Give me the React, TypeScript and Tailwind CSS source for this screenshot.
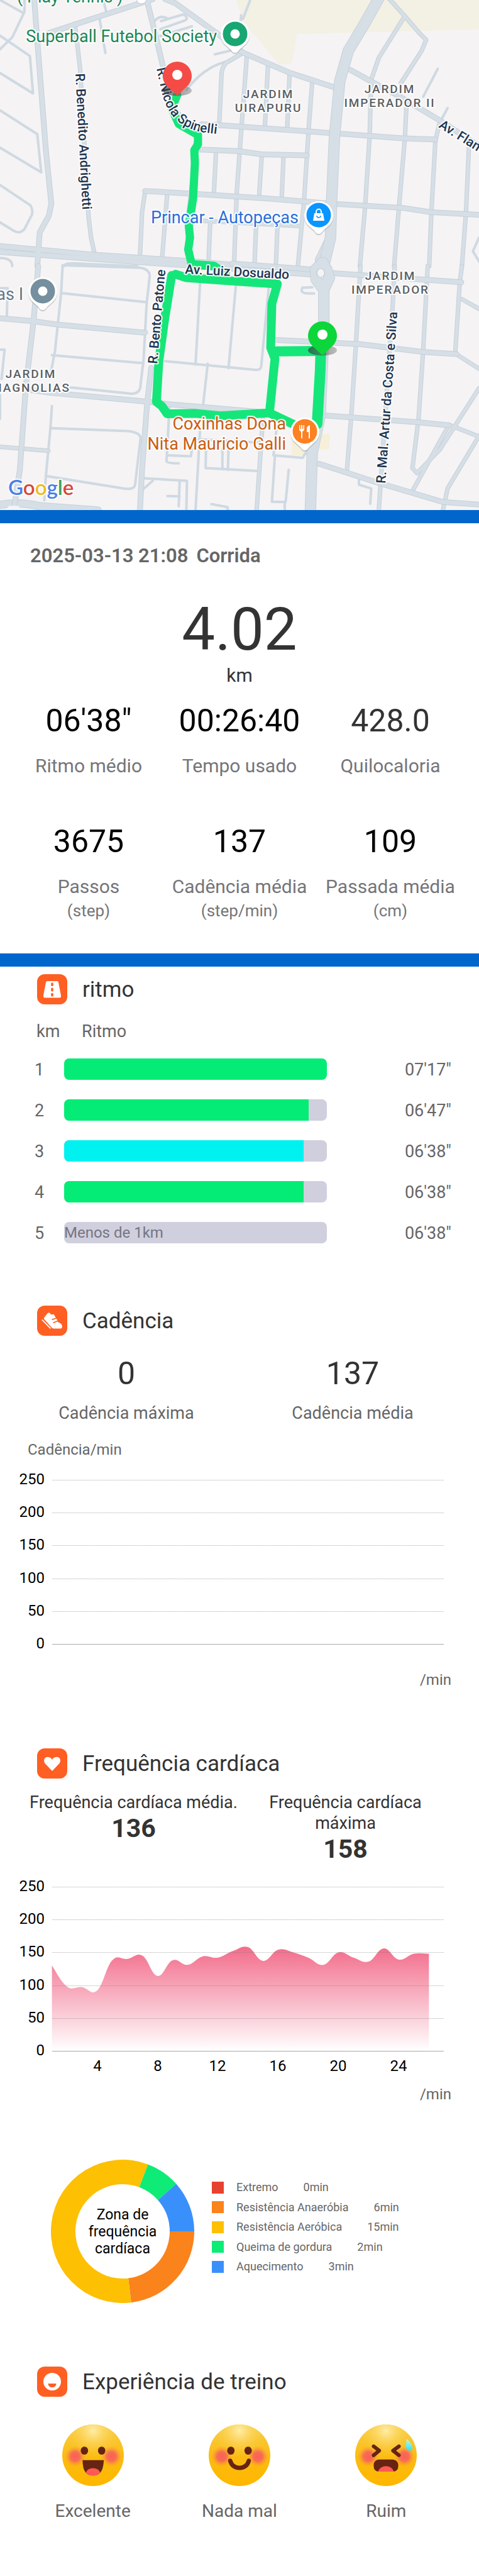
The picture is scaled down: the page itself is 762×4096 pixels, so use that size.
import type { ReactNode } from "react";

const PLACE = "font-[Roboto,sans-serif] text-[27px] font-normal [paint-order:stroke] [stroke-linejoin:round]";
const DISTRICT = "fill-[#5b5f63] font-[Roboto,sans-serif] text-[19px] font-medium tracking-widest [paint-order:stroke] [stroke-linejoin:round]";
const STREET = "fill-[#1f3550] font-[Roboto,sans-serif] text-[21px] font-medium [paint-order:stroke] [stroke-linejoin:round]";

/* Road geometry: north tile and south tile of the map, each on a 1568-unit grid. */
const NORTH_LANES = [
  "M80,-10 L80,70 L40,220 L0,290", "M0,0 L75,75", "M0,210 L98,330 L108,550 L0,430",
  "M0,650 L122,790 L135,1015 L0,870",
  "M0,1090 L100,1210 Q112,1250 100,1280 L80,1350 Q65,1380 45,1360 L0,1310",
  "M0,1520 Q40,1520 40,1568", "M210,1568 Q210,1548 250,1552 L450,1568",
  "M325,100 L345,312", "M340,15 L348,70", "M505,125 Q525,85 548,108",
  "M527,124 L600,85 Q620,105 606,120 L525,172", "M525,212 L628,155", "M820,-5 L795,112", "M789,90 L788,130",
  "M703,320 L770,292", "M737,365 Q665,400 610,530", "M1433,405 L1385,570", "M1465,637 L1440,720", "M1568,1400 L1548,1480 L1568,1540",
];
const NORTH_STREETS = [
  "M245,140 L262,400 L290,1280 L298,1400 L310,1500",
  "M797,310 L740,370 Q725,400 725,440 L718,720",
  "M808,330 L790,760 L775,1130 L766,1568", "M877,385 L867,750", "M948,430 L940,760",
  "M1022,480 L1010,770 L995,1190 L975,1568",
  "M1275,-5 L1325,95 L1370,190 L1395,235 L1380,300 L1312,490",
  "M1325,95 L1240,340 L1215,470 L1210,800 L1195,1220 L1178,1568",
  "M1440,715 L1425,830 L1412,1250 L1405,1568", "M1330,640 L1325,820 L1305,1240 L1290,1568",
  "M1535,860 L1525,1260 L1512,1568", "M707,895 L700,1145", "M857,910 L848,1160", "M928,920 L922,1170",
  "M475,1125 L465,1250 L458,1512", "M547,1150 L530,1535", "M650,1300 L985,1332",
  "M688,1310 L682,1568", "M838,1340 L833,1568", "M908,1340 L903,1568",
];
const NORTH_ROADS = [
  "M112,-5 L120,190 L150,880 L168,1200 L160,1270 L130,1370 L122,1568",
  "M160,195 L320,100 L500,-5", "M540,-5 L575,20 L720,210 L797,312",
  "M480,-5 L515,250 L545,480 L570,640 L620,760 L650,790 L635,900 L638,960 L620,1250 L615,1500",
  "M797,312 L950,430 L1095,515", "M660,732 L740,740 L1095,785 L1320,815 L1425,822",
  "M1145,410 L1215,480 L1300,560 L1440,710 L1568,860",
  "M640,880 L780,890 L860,910 L1005,915",
  "M475,1125 L620,1140 L880,1170 L1085,1200 L1320,1225 L1410,1250 L1568,1265",
  "M0,1450 L300,1500 L620,1538 L850,1575", "M0,1485 L300,1525 L600,1562 L650,1575", "M1080,1380 L1040,1530 L1040,1580",
];
const SOUTH_LANES = [
  "M205,-5 L460,10 Q490,20 490,60 L480,220 L470,550 L460,700 Q460,752 430,752 L230,715",
  "M205,-5 L200,160 L180,500 L165,640", "M205,160 L480,213", "M170,525 L470,572",
  "M0,492 L15,492 L5,665", "M0,130 L25,130 L22,310", "M170,825 L165,955 L150,1240 L145,1380",
  "M165,955 L420,972 Q460,980 460,1015 L442,1290 Q438,1320 405,1310 L155,1238",
  "M470,1250 L612,1265 L610,1437", "M470,1312 L500,1265", "M588,1270 L585,1415", "M548,1355 L588,1357", "M692,1402 L745,1420 L745,1437",
  "M555,820 L545,1150 Q548,1162 585,1162", "M548,1115 L625,1120 L632,1020", "M655,960 L640,1437", "M680,575 L665,815",
  "M540,560 L840,612 Q855,610 855,590 L880,120", "M655,95 L640,580", "M772,115 L748,602",
  "M650,1020 L850,1040", "M675,1030 L673,1190 L838,1207", "M728,1080 L728,1195", "M748,1080 L746,1200",
  "M905,960 L895,1115 L990,1130 L1008,1080", "M945,1200 L935,1390 L890,1388 L900,1115", "M932,1390 L932,1437",
  "M1175,1262 L1175,1288 L1215,1310 L1212,1400", "M1022,125 L990,127 Q982,155 1000,160 L1028,162", "M0,760 L0,900",
];
const SOUTH_STREETS = [
  "M1180,0 L1165,460 L1150,880 L1135,1215", "M1292,0 L1285,240 L1240,1437",
  "M1400,0 L1385,500 L1370,900 L1350,1190 L1365,1220 L1440,1080 L1568,720",
  "M1512,0 L1505,95 L1490,515", "M1490,515 L1568,605", "M1512,195 L1568,252",
  "M1470,935 L1350,1325", "M1470,935 L1568,1005 M1568,1000 L1465,1310 L1450,1437", "M862,860 L840,1437", "M0,1065 L158,1088",
];
const SOUTH_ROADS = [
  "M125,0 L110,320 L85,700 L65,1200 L45,1437", "M0,307 L110,325 L190,345 L475,392",
  "M100,730 L160,745 L490,800 L560,815 L870,862", "M495,600 L482,800 L465,1200 L458,1437",
  "M900,435 L1180,460 L1380,505 L1495,518", "M1060,880 L1370,920 L1470,938",
  "M1045,1165 L1230,1272 L1450,1390 L1568,1405", "M760,-15 L1020,20", "M760,15 L1020,50", "M1080,40 L1510,95",
];

function Roads({ paths, width, cased }: { paths: string[]; width: number; cased?: boolean }) {
  return (
    <g fill="none" strokeLinecap="round" strokeLinejoin="round">
      {cased && paths.map((d) => <path key={"c" + d} d={d} stroke="#c6d0d9" strokeWidth={width + 1} vectorEffect="non-scaling-stroke" />)}
      {paths.map((d) => <path key={d} d={d} stroke={cased ? "#d6dfe6" : "#cfd9e2"} strokeWidth={cased ? width - 1 : width} vectorEffect="non-scaling-stroke" />)}
    </g>
  );
}

function Poi({ x, y, color, children }: { x: number; y: number; color: string; children?: ReactNode }) {
  return (
    <g transform={`translate(${x} ${y})`}>
      <path d="M0,30 C-4,30 -5,27 -8,24 L-18,15 A23,23 0 1 1 18,15 L8,24 C5,27 4,30 0,30Z" fill="#8c949c" opacity="0.45" transform="translate(0 2)" />
      <path d="M0,30 C-4,30 -5,27 -8,24 L-18,15 A23,23 0 1 1 18,15 L8,24 C5,27 4,30 0,30Z" fill="#fff" />
      <circle r="19.5" fill={color} />
      {children ?? <circle r="7.5" fill="#fff" />}
    </g>
  );
}

function RoutePin({ x, y, color }: { x: number; y: number; color: string }) {
  return (
    <g transform={`translate(${x} ${y})`}>
      <ellipse cx="0" cy="-8" rx="23" ry="8.5" fill="url(#pinShadow)" />
      <path d="M0,0 L-16,-15 C-20,-19 -23,-25 -23,-31 A23,23 0 0 1 23,-31 C23,-25 20,-19 16,-15Z" fill={color} />
      <circle cy="-33" r="8" fill="#fff" />
    </g>
  );
}

function RouteMap() {
  return (
    <svg viewBox="0 0 762 811" className="block h-auto w-full bg-[#f5f3f4]" role="img" aria-label="Mapa">
      <defs>
        <linearGradient id="pinShadow" x1="0" x2="1">
          <stop offset="0" stopColor="#333" stopOpacity="0.65" />
          <stop offset="1" stopColor="#555" stopOpacity="0.35" />
        </linearGradient>
        <path id="nicola" d="M249,109 L257,145 Q263,172 277,187 Q293,204 320,210 L380,217" />
      </defs>
      <g transform="scale(0.486 0.2699)">
        <path d="M773,0 L800,140 L850,240 L910,375 Q935,385 955,370 L972,200 L1568,172 V0Z" fill="#f3f0e4" />
        <Roads paths={NORTH_LANES} width={4} />
        <Roads paths={NORTH_STREETS} width={6} cased />
        <Roads paths={NORTH_ROADS} width={8} cased />
        <Roads paths={["M1240,-10 L1190,150 L1140,300 L1112,480 L1095,800 L1085,1200 L1082,1400 L1058,1580"]} width={17} cased />
      </g>
      <g transform="translate(0 423.1) scale(0.486 0.2699)">
        <path d="M955,1030 L1020,1000 L1078,985 V1078 H1030 L1005,1115 H955Z" fill="#f6efd9" />
        <Roads paths={SOUTH_LANES} width={4} />
        <Roads paths={SOUTH_STREETS} width={6} cased />
        <Roads paths={["M-10,1410 Q60,1385 130,1415 L320,1440"]} width={12} cased />
        <Roads paths={SOUTH_ROADS} width={8} cased />
        <Roads paths={["M1058,-20 L1032,20 L1035,80 L1060,140 L1078,70 L1070,20 L1055,-20", "M1060,130 L1060,350 L1055,600 L1048,880 L1022,1100 L1016,1437"]} width={17} cased />
        <ellipse cx="1050" cy="40" rx="13" ry="25" fill="#f5f3f4" stroke="#c2ccd6" strokeWidth="3" />
        <path d="M18,1437 L30,1412 H60 L70,1437Z" fill="#f5f3f4" />
      </g>
      <g fill="none" stroke="#15e67a" strokeLinecap="round" strokeLinejoin="round">
        <g transform="scale(0.486 0.2699)" strokeWidth="13">
          <path d="M580,560 L562,640 L585,730 L648,795 L648,850 L636,885 L638,960 L632,1170 L618,1330 L622,1400 L616,1470 L628,1560" vectorEffect="non-scaling-stroke" />
        </g>
        <g transform="translate(0 423.1) scale(0.486 0.2699)" strokeWidth="14">
          <path d="M628,-10 L700,0 L740,50 M628,-10 L640,50" vectorEffect="non-scaling-stroke" />
          <path d="M575,48 L610,68 L760,88 L908,105 L890,220 L886,480 L900,545 L882,865 L720,882 L640,868 L547,870 L530,825 L512,800 L520,560 L540,300 L562,55" vectorEffect="non-scaling-stroke" />
          <path d="M882,865 L960,932" vectorEffect="non-scaling-stroke" />
          <path d="M1050,510 L1048,620 L1038,930" strokeWidth="17" vectorEffect="non-scaling-stroke" />
          <path d="M905,503 L1045,500" strokeWidth="16" vectorEffect="non-scaling-stroke" />
        </g>
      </g>

      <g stroke="#fff" strokeOpacity="0.9" strokeWidth="4">
        <text x="27" y="4" className={PLACE} fill="#1d8556">( Play Tennis )</text>
        <text x="345" y="67" textAnchor="end" className={PLACE} fill="#1d8556">Superball Futebol Society</text>
        <text x="475" y="355" textAnchor="end" className={PLACE} fill="#2a6fdb">Princar - Autopeças</text>
        <text x="37" y="477" textAnchor="end" className={PLACE} fill="#607887">as I</text>
        <text x="455" y="683" textAnchor="end" className={PLACE} fill="#c95c10">Coxinhas Dona</text>
        <text x="455" y="715" textAnchor="end" className={PLACE} fill="#c95c10">Nita Mauricio Galli</text>
        <g textAnchor="middle">
          <text x="427" y="156" className={DISTRICT}>JARDIM</text>
          <text x="427" y="178" className={DISTRICT}>UIRAPURU</text>
          <text x="620" y="148" className={DISTRICT}>JARDIM</text>
          <text x="620" y="170" className={DISTRICT}>IMPERADOR II</text>
          <text x="621" y="445" className={DISTRICT}>JARDIM</text>
          <text x="621" y="467" className={DISTRICT}>IMPERADOR</text>
          <text x="49" y="601" className={DISTRICT}>JARDIM</text>
          <text x="49" y="623" className={DISTRICT}>MAGNOLIAS</text>
        </g>
        <text transform="translate(120 117) rotate(87)" className={STREET}>R. Benedito Andrighetti</text>
        <text className={STREET}><textPath href="#nicola">R. Nicola Spinelli</textPath></text>
        <text transform="translate(697 202) rotate(32)" className={STREET}>Av. Flam</text>
        <text transform="translate(294 435) rotate(3)" className={STREET}>Av. Luiz Dosualdo</text>
        <text transform="translate(250 579) rotate(-85)" className={STREET}>R. Bento Patone</text>
        <text transform="translate(613 769) rotate(-86)" className={STREET}>R. Mal. Artur da Costa e Silva</text>
        <text x="13" y="787" className="font-[Lato,sans-serif] text-[33px] font-semibold [paint-order:stroke] [stroke-linejoin:round]">
          <tspan fill="#4a80e8">G</tspan><tspan fill="#d8483c">o</tspan><tspan fill="#eebb22">o</tspan><tspan fill="#4a80e8">g</tspan><tspan fill="#3fa256">l</tspan><tspan fill="#d8483c">e</tspan>
        </text>
      </g>

      <circle cx="225" cy="-2" r="8" fill="#fff" stroke="#c2ccd6" />
      <Poi x={374} y={54} color="#18a673" />
      <Poi x={507} y={342} color="#0a95ff">
        <path d="M-7,-3 H7 L9,9 H-9Z" fill="#fff" />
        <path d="M-4,-3 V-5 A4,4.500 0 0 1 4,-5 V-3" fill="none" stroke="#fff" strokeWidth="2" />
        <path d="M-3,1 A3,3 0 0 0 3,1" fill="none" stroke="#0a95ff" strokeWidth="1.500" />
      </Poi>
      <Poi x={68} y={463} color="#758f9e" />
      <Poi x={485} y={686} color="#fd8123">
        <path d="M-9,-10 V-4 Q-9,-1 -6,0 V11 H-4 V0 Q-1,-1 -1,-4 V-10 H-2.500 V-4 H-4 V-10 H-6 V-4 H-7.500 V-10Z" fill="#fff" />
        <path d="M8,-10 Q3,-9 3,-4 V1 H6 V11 H8Z" fill="#fff" />
      </Poi>
      <RoutePin x={282} y={152} color="#f54b46" />
      <RoutePin x={513} y={565} color="#0cd63a" />
    </svg>
  );
}

function Divider() {
  return <div className="h-[21px] bg-[#0066cc]" />;
}

function IconTile({ children }: { children: ReactNode }) {
  return (
    <svg viewBox="0 0 48 48" className="size-12 shrink-0" aria-hidden="true">
      <rect width="48" height="48" rx="12" fill="#ff5f22" />
      {children}
    </svg>
  );
}

function SectionTitle({ icon, children }: { icon: ReactNode; children: ReactNode }) {
  return (
    <header className="flex items-center gap-6 px-[59px]">
      <IconTile>{icon}</IconTile>
      <h2 className="pt-0.5 text-[35px] leading-[46px] text-[#333]">{children}</h2>
    </header>
  );
}

const roadIcon = (
  <>
    <path d="M16,11 H32 Q33.500,11 34,13 L38,34 Q38.500,37.500 35.500,37.500 H12.500 Q9.500,37.500 10,34 L14,13 Q14.500,11 16,11Z" fill="#fff" />
    <g fill="#ff5f22">
      <rect x="22.200" y="13.500" width="3.600" height="5.500" rx="1.500" />
      <rect x="22.200" y="21.500" width="3.600" height="6" rx="1.500" />
      <rect x="22.200" y="30" width="3.600" height="5.500" rx="1.500" />
    </g>
  </>
);

const shoeIcon = (
  <g transform="scale(0.233) translate(-16 -12)">
    <path d="M88,64 Q97,56 104,64 Q108,76 120,73 Q130,68 134,77 L145,98 L157,116 Q156,126 168,129 Q189,138 187,158 Q186,169 174,169 H132 Q122,169 116,162 L64,104 Q60,97 66,91Z" fill="#fff" />
    <path d="M52,110 L106,166" stroke="#fff" strokeWidth="7" strokeLinecap="round" />
    <path d="M120,107 L146,98 M128,129 L158,116" stroke="#ff5f22" strokeWidth="7" strokeLinecap="round" />
  </g>
);

const heartIcon = (
  <path d="M24,36 L13.500,25 C9.500,20.500 10.500,14.500 16,13.800 C20,13.300 22.500,15.500 24,18 C25.500,15.500 28,13.300 32,13.800 C37.500,14.500 38.500,20.500 34.500,25Z" fill="#fff" />
);

const faceIcon = (
  <>
    <circle cx="24" cy="24" r="14" fill="#fff" />
    <path d="M17.500,27 H30.500 Q30,33 24,33 Q18,33 17.500,27Z" fill="#ff5f22" />
  </>
);

function Stat({ value, label, unit, soft }: { value: string; label: string; unit?: string; soft?: boolean }) {
  return (
    <div className="flex flex-col items-center whitespace-nowrap">
      <span className={soft ? "text-[50px] leading-[58px] text-[#333]" : "text-[50px] leading-[58px] text-black"}>{value}</span>
      <span className="mt-[25px] text-[30px] leading-9 text-[#757579]">{label}</span>
      {unit && <span className="mt-1 text-[26px] leading-8 text-[#757579]">{unit}</span>}
    </div>
  );
}

const SPLITS = [
  { km: 1, pace: "07'17\"", share: 100, color: "#04ec75" },
  { km: 2, pace: "06'47\"", share: 93.1, color: "#04ec75" },
  { km: 3, pace: "06'38\"", share: 91.2, color: "#00f2f0" },
  { km: 4, pace: "06'38\"", share: 91.2, color: "#04ec75" },
  { km: 5, pace: "06'38\"", share: 0, color: "#04ec75", note: "Menos de 1km" },
];

function Splits() {
  return (
    <table className="mt-[26px] w-full border-collapse text-left text-[27px] text-[#666]">
      <thead>
        <tr className="h-[46px] align-top leading-[34px]">
          <th className="w-[102px] pl-[58px] font-normal">km</th>
          <th colSpan={2} className="pl-7 font-normal">Ritmo</th>
        </tr>
      </thead>
      <tbody>
        {SPLITS.map((s) => (
          <tr key={s.km} className="h-[65px]">
            <td className="pl-[55px]">{s.km}</td>
            <td>
              <div className="mb-1 flex h-[34px] items-center overflow-hidden rounded-lg bg-[#d0cfde]">
                <div className="h-full" style={{ width: `${s.share}%`, backgroundColor: s.color }} />
                {s.note && <span className="text-[24px] leading-none text-[#757582]">{s.note}</span>}
              </div>
            </td>
            <td className="w-[242px] pr-11 text-right">{s.pace}</td>
          </tr>
        ))}
      </tbody>
    </table>
  );
}

const HEART = [
  130, 98, 97, 92, 138, 140, 145, 114, 138, 131, 144, 142, 152, 158, 137, 154, 150, 142, 131, 150, 142, 136, 156, 139, 148, 148,
];

const xAt = (minute: number) => 82.6 + (minute - 1) * 23.99;
const yAt = (value: number) => 295 - value * 1.044;

function areaPath(values: number[]) {
  const pts = values.map((v, i) => [xAt(i + 1), yAt(v)]);
  const at = (i: number) => pts[Math.max(0, Math.min(pts.length - 1, i))];
  let d = `M${pts[0][0]},${pts[0][1]}`;
  for (let i = 1; i < pts.length; i++) {
    const [a, b, c, e] = [at(i - 2), at(i - 1), at(i), at(i + 1)];
    d += ` C${b[0] + (c[0] - a[0]) * 0.2},${b[1] + (c[1] - a[1]) * 0.2} ${c[0] - (e[0] - b[0]) * 0.2},${c[1] - (e[1] - b[1]) * 0.2} ${c[0]},${c[1]}`;
  }
  return `${d} L${pts[pts.length - 1][0]},295 L${pts[0][0]},295Z`;
}

function MinuteChart({ values, ticks = [] }: { values?: number[]; ticks?: number[] }) {
  return (
    <svg viewBox="0 0 762 338" className="block h-auto w-full">
      <defs>
        <linearGradient id="heartFill" x1="0" y1="0" x2="0" y2="1">
          <stop offset="0" stopColor="#f26c8b" />
          <stop offset="1" stopColor="#ffffff" />
        </linearGradient>
      </defs>
      {values && <path d={areaPath(values)} fill="url(#heartFill)" />}
      {[250, 200, 150, 100, 50].map((v) => (
        <line key={v} x1="83" x2="706" y1={Math.round(yAt(v)) + 0.5} y2={Math.round(yAt(v)) + 0.5} stroke="#777" strokeOpacity="0.6" strokeDasharray="1 1" />
      ))}
      <line x1="83" x2="706" y1="295.5" y2="295.5" stroke="#aaa" strokeWidth="1" />
      <g className="fill-black text-[24px]">
        {[250, 200, 150, 100, 50, 0].map((v) => (
          <text key={v} x="71" y={Math.round(yAt(v)) + 7} textAnchor="end">{v}</text>
        ))}
        {ticks.map((t) => (
          <text key={t} x={Math.round(xAt(t))} y="327" textAnchor="middle">{t}</text>
        ))}
      </g>
    </svg>
  );
}

const ZONES = [
  { name: "Extremo", minutes: 0, color: "#e74230" },
  { name: "Resistência Anaeróbia", minutes: 6, color: "#fa831b" },
  { name: "Resistência Aeróbica", minutes: 15, color: "#fdc003" },
  { name: "Queima de gordura", minutes: 2, color: "#0eeb77" },
  { name: "Aquecimento", minutes: 3, color: "#3a90fb" },
];

function Donut() {
  const total = ZONES.reduce((sum, z) => sum + z.minutes, 0);
  const point = (r: number, t: number) => `${114 + r * Math.cos(t)},${114 + r * Math.sin(t)}`;
  let start = 0;
  return (
    <svg viewBox="0 0 228 228" className="col-start-1 row-start-1 size-[228px]" aria-hidden="true">
      {ZONES.filter((z) => z.minutes > 0).map((z) => {
        const end = start + (z.minutes / total) * 2 * Math.PI;
        const large = end - start > Math.PI ? 1 : 0;
        const d = `M${point(114, start)} A114,114 0 ${large} 1 ${point(114, end)} L${point(75, end)} A75,75 0 ${large} 0 ${point(75, start)}Z`;
        start = end;
        return <path key={z.name} d={d} fill={z.color} />;
      })}
    </svg>
  );
}

function Face({ children }: { children: ReactNode }) {
  return (
    <svg viewBox="0 0 100 100" className="size-[98px]" aria-hidden="true">
      <defs>
        <linearGradient id="skin" x1="0" y1="0" x2="0" y2="1">
          <stop offset="0" stopColor="#f8cf4a" />
          <stop offset="0.550" stopColor="#fbbb10" />
          <stop offset="1" stopColor="#ffb700" />
        </linearGradient>
        <radialGradient id="shine" cx="0.500" cy="0.100" r="0.450">
          <stop offset="0" stopColor="#ffeda8" />
          <stop offset="1" stopColor="#fbc62c" stopOpacity="0" />
        </radialGradient>
        <radialGradient id="cheek">
          <stop offset="0" stopColor="#f8605c" />
          <stop offset="0.450" stopColor="#f8605c" stopOpacity="0.850" />
          <stop offset="1" stopColor="#fb9a30" stopOpacity="0" />
        </radialGradient>
        <linearGradient id="sweat" x1="0" y1="0" x2="0" y2="1">
          <stop offset="0" stopColor="#b8fbe6" />
          <stop offset="1" stopColor="#35e0f5" />
        </linearGradient>
      </defs>
      <circle cx="50" cy="50" r="50" fill="url(#skin)" />
      <circle cx="50" cy="50" r="50" fill="url(#shine)" />
      <circle cx="21" cy="52" r="17" fill="url(#cheek)" />
      <circle cx="80" cy="52" r="17" fill="url(#cheek)" />
      {children}
    </svg>
  );
}

const openEyes = (
  <g fill="#672413">
    <ellipse cx="36" cy="42.500" rx="6" ry="6.600" />
    <ellipse cx="64" cy="42.500" rx="6" ry="6.600" />
  </g>
);

const MOODS = [
  {
    label: "Excelente",
    face: (
      <>
        {openEyes}
        <path d="M33,58 H67.500 Q67,72 62,78 Q57,83 50,83 Q43,83 38,78 Q33,72 33,58Z" fill="#672413" />
        <path d="M38,78 Q42,71 50,71 Q58,71 62,78 Q57,83 50,83 Q43,83 38,78Z" fill="#fd5a53" />
      </>
    ),
  },
  {
    label: "Nada mal",
    face: (
      <>
        {openEyes}
        <path d="M35,59 Q38,70 50,70.500 Q62,70 65,59" fill="none" stroke="#672413" strokeWidth="7" strokeLinecap="round" />
      </>
    ),
  },
  {
    label: "Ruim",
    face: (
      <>
        <path d="M30,35.500 L39,42.500 L30,50 M71,35.500 L61.500,42.500 L71,50" fill="none" stroke="#672413" strokeWidth="6" strokeLinecap="round" strokeLinejoin="round" />
        <path d="M38,57 H61 Q70,58 70,67 Q70,76 62,76.500 H38 Q30,76 30,67 Q30,58 38,57Z" fill="#672413" />
        <path d="M37,76.500 Q40,68 50,67.500 Q60,68 63,76.500Z" fill="#fd5a53" />
        <path d="M84,23.500 Q94,33 93,38 Q92,43 88,42.500 Q83,42 82.500,37 Q82,32 84,23.500Z" fill="url(#sweat)" />
      </>
    ),
  },
];

export default function App() {
  return (
    <main className="w-full overflow-hidden bg-white font-[Roboto,sans-serif] text-[#333]">
      <RouteMap />
      <Divider />

      <section className="pt-[34px] pb-[52px]">
        <h1 className="flex gap-[13px] px-12 text-[31px] leading-9 font-semibold text-[#666]">
          <time dateTime="2025-03-13T21:08">2025-03-13 21:08</time>
          <span>Corrida</span>
        </h1>
        <div className="mt-11 flex flex-col items-center gap-0.5">
          <span className="text-[94px] leading-[110px]">4.02</span>
          <span className="text-[30px] leading-8">km</span>
        </div>
        <div className="mt-[27px] grid grid-cols-3 gap-y-[73px] px-[21px]">
          <Stat value={"06'38\""} label="Ritmo médio" />
          <Stat value="00:26:40" label="Tempo usado" />
          <Stat value="428.0" label="Quilocaloria" soft />
          <Stat value="3675" label="Passos" unit="(step)" />
          <Stat value="137" label="Cadência média" unit="(step/min)" />
          <Stat value="109" label="Passada média" unit="(cm)" />
        </div>
      </section>
      <Divider />

      <section className="pt-3">
        <SectionTitle icon={roadIcon}>ritmo</SectionTitle>
        <Splits />
      </section>

      <section className="mt-[82px]">
        <SectionTitle icon={shoeIcon}>Cadência</SectionTitle>
        <div className="mt-[31px] grid grid-cols-2 px-[21px] text-center">
          {[["0", "Cadência máxima"], ["137", "Cadência média"]].map(([value, label]) => (
            <div key={label} className="flex flex-col gap-[17px]">
              <span className="text-[50px] leading-[58px]">{value}</span>
              <span className="text-[27px] leading-[34px] text-[#666]">{label}</span>
            </div>
          ))}
        </div>
        <p className="mt-[27px] px-11 text-[24px] leading-7 text-[#666]">Cadência/min</p>
        <MinuteChart />
        <p className="px-11 text-right text-[24px] leading-7 text-[#666]">/min</p>
      </section>

      <section className="mt-[95px]">
        <SectionTitle icon={heartIcon}>Frequência cardíaca</SectionTitle>
        <div className="mt-[22px] grid h-[114px] grid-cols-2 px-11 text-center text-[27px] leading-[33px]">
          <div>
            <p className="whitespace-nowrap">Frequência cardíaca média.</p>
            <p className="text-[41px] leading-[48px] font-bold">136</p>
          </div>
          <div>
            <p className="px-8">Frequência cardíaca máxima</p>
            <p className="text-[41px] leading-[48px] font-bold">158</p>
          </div>
        </div>
        <div className="mt-[2px]">
          <MinuteChart values={HEART} ticks={[4, 8, 12, 16, 20, 24]} />
        </div>
        <p className="mt-3 px-11 text-right text-[24px] leading-7 text-[#666]">/min</p>

        <div className="mt-[90px] flex gap-[28px] px-[81px]">
          <div className="grid shrink-0 place-items-center">
            <Donut />
            <p className="col-start-1 row-start-1 w-[120px] text-center text-[23px] leading-[27px] text-black">Zona de frequência cardíaca</p>
          </div>
          <ul className="mt-[34px] flex h-[146px] flex-col justify-between text-[18px] leading-5 text-[#666]">
            {ZONES.map((z) => (
              <li key={z.name} className="flex items-center whitespace-nowrap">
                <span className="mr-5 size-[19px]" style={{ backgroundColor: z.color }} />
                <span className="mr-10">{z.name}</span>
                <span>{z.minutes}min</span>
              </li>
            ))}
          </ul>
        </div>
      </section>

      <section className="mt-[101px] pb-[86px]">
        <SectionTitle icon={faceIcon}>Experiência de treino</SectionTitle>
        <div className="mt-11 grid grid-cols-3 px-[31px]">
          {MOODS.map((m) => (
            <button key={m.label} type="button" className="flex flex-col items-center gap-[23px] text-[28px] leading-[34px] text-[#666]">
              <Face>{m.face}</Face>
              <span>{m.label}</span>
            </button>
          ))}
        </div>
      </section>
    </main>
  );
}
